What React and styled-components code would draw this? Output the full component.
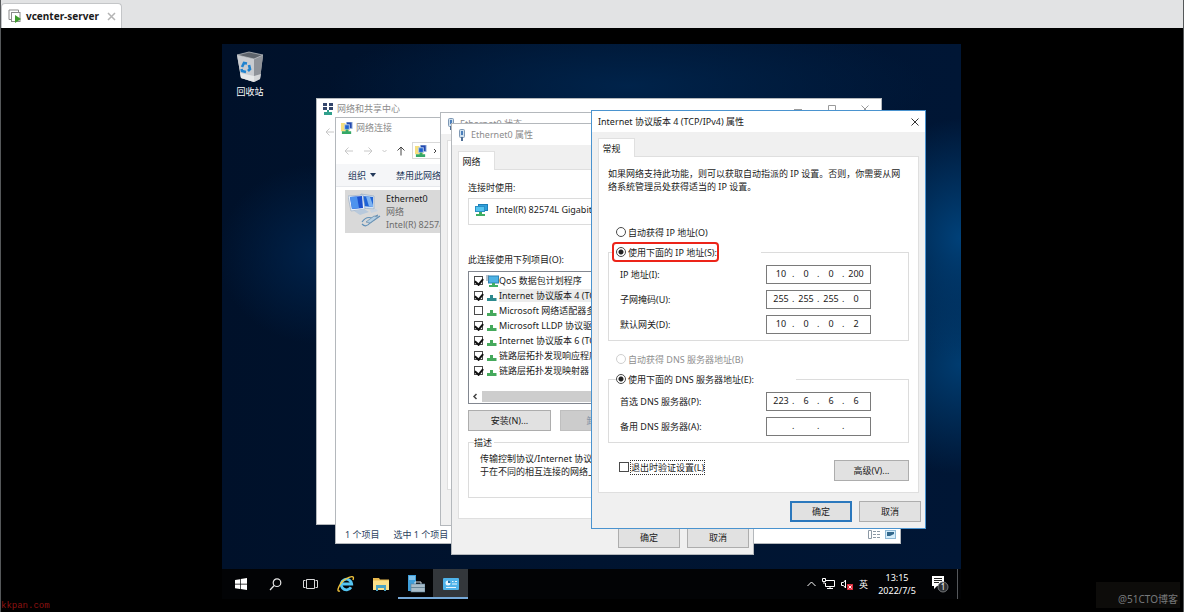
import React, { useState } from 'react';
import styled, { createGlobalStyle, css } from 'styled-components';

const GlobalStyle = createGlobalStyle`
  * {
    box-sizing: border-box;
  }
  body {
    margin: 0;
    background: #000000;
    color: #1a1a1a;
    font-family: "Noto Sans", "Noto Sans CJK SC", sans-serif;
    font-size: 9px;
    line-height: 13px;
  }
  button, input {
    font: inherit;
    color: inherit;
    margin: 0;
    padding: 0;
  }
  svg {
    display: block;
    flex: none;
  }
`
const Page = styled.div`
  min-height: 100vh;
  display: flex;
  flex-direction: column;
  position: relative;
  border-left: 1px solid #55585a;
  border-right: 1px solid #55585a;
`
const TabStrip = styled.div`
  display: flex;
  align-items: flex-end;
  height: 28px;
  background: #e2e3e4;
`
const VmTab = styled.div`
  display: flex;
  align-items: center;
  gap: 4px;
  height: 25px;
  padding: 0 5px 0 6px;
  background: #ffffff;
  border: 1px solid #c4c6c8;
  border-bottom: 0;
  border-radius: 4px 4px 0 0;
  font-size: 10px;
  font-weight: bold;
`
const TabClose = styled.button`
  margin-left: 4px;
  border: 0;
  background: none;
`
const Console = styled.div`
  flex: 1;
  display: flex;
  padding: 16px 222px 13px 221px;
  background: #000000;
`
const Desktop = styled.div`
  flex: 1;
  display: flex;
  flex-direction: column;
  position: relative;
`
const Wallpaper = styled.div`
  flex: 1;
  padding: 6px 10px;
  background:
    radial-gradient(ellipse 100px 120px at 100% 37%, #004179 0%, rgba(0, 65, 121, 0) 100%),
    radial-gradient(ellipse 110px 110px at 100% 61%, #003c70 0%, rgba(0, 60, 112, 0) 100%),
    radial-gradient(ellipse 100px 90px at 13% 40%, #00224a 0%, rgba(0, 34, 74, 0) 100%),
    radial-gradient(ellipse 300px 70px at 55% 8%, #00234a 0%, rgba(0, 35, 74, 0) 100%),
    linear-gradient(90deg, #00112a 0%, #001430 50%, #001635 100%);
`
const DesktopIcon = styled.div`
  width: 36px;
  display: flex;
  flex-direction: column;
  align-items: center;
  gap: 1px;
  color: #ffffff;
`

/* windows */
const Window = styled.div`
  position: absolute;
  left: ${p => p.$x}px;
  top: ${p => p.$y}px;
  width: ${p => p.$w}px;
  display: flex;
  flex-direction: column;
  overflow: hidden;
  background: ${p => p.$dialog ? '#f0f0f0' : '#ffffff'};
  border: 1px solid ${p => p.$active ? '#4a93cf' : '#b4b8bc'};
  ${p => p.$h && css`height: ${p.$h}px;`}
`
const TitleBar = styled.div`
  display: flex;
  align-items: center;
  gap: 5px;
  height: 21px;
  padding: 0 6px;
  background: #ffffff;
  color: ${p => p.$active ? '#1a1a1a' : '#8c8c8c'};
`
const FolderTitleBar = styled(TitleBar)`
  gap: 3px;
  height: 19px;
  padding: 0 12px 0 5px;
`
const WindowButtons = styled.div`
  display: flex;
  gap: 24px;
  margin-left: auto;
`
const CaptionButton = styled.button`
  border: 0;
  background: none;
  color: ${p => p.$active ? '#333333' : '#9a9a9a'};
`
const NavBar = styled.div`
  display: flex;
  align-items: center;
  gap: 9px;
  height: 27px;
  padding: 0 8px;
`
const AddressBox = styled.div`
  flex: 1;
  display: flex;
  align-items: center;
  gap: 6px;
  height: 17px;
  margin-left: -3px;
  padding: 0 2px;
  border: 1px solid #d9d9d9;
`
const CommandBar = styled.div`
  display: flex;
  align-items: center;
  gap: 20px;
  height: 23px;
  padding: 0 12px;
  background: #f5f6f8;
  border-bottom: 1px solid #e6e8ec;
  color: #23395a;
`
const Command = styled.button`
  display: flex;
  align-items: center;
  gap: 4px;
  border: 0;
  background: none;
`
const Connection = styled.div`
  display: flex;
  gap: 4px;
  width: 180px;
  height: 43px;
  margin: 3px 9px;
  padding: 2px 3px;
  background: #d9d9d9;
  color: #6d6d6d;
`
const ConnectionName = styled.div`
  color: #1a1a1a;
`
const StatusBar = styled.div`
  display: flex;
  align-items: center;
  gap: 14px;
  height: 17px;
  margin-top: auto;
  padding: 0 4px 0 9px;
  color: #2b4260;
`
const ViewIcons = styled.div`
  display: flex;
  gap: 5px;
  margin-left: auto;
`
const Tabs = styled.div`
  display: flex;
  padding: 6px 6px 0;
`
const Tab = styled.button`
  height: 19px;
  width: 37px;
  padding-right: 10px;
  margin-bottom: -1px;
  background: #ffffff;
  border: 1px solid #e0e0e0;
  border-bottom: 0;
  z-index: 1;
`
const Panel = styled.div`
  margin: 0 6px;
  padding: ${p => p.$top || 10}px 9px ${p => p.$bottom}px;
  background: #ffffff;
  border: 1px solid #dfdfdf;
`
const Footer = styled.div`
  display: flex;
  justify-content: flex-end;
  gap: 7px;
  padding: 8px 4px 6px;
`
const Button = styled.button`
  width: ${p => p.$width || 62}px;
  height: 21px;
  background: ${p => p.disabled ? '#cccccc' : '#e1e1e1'};
  border: ${p => p.$primary ? '2px solid #2b78bd' : '1px solid #adadad'};
  ${p => p.disabled && css`
    border-color: #bfbfbf;
    color: #8290a4;
  `}
`
const Adapter = styled.div`
  display: flex;
  align-items: center;
  gap: 8px;
  height: 27px;
  margin: 4px 0 28px;
  padding: 0 6px 4px;
  border: 1px solid #dcdcdc;
  white-space: nowrap;
`
const ItemList = styled.div`
  display: flex;
  flex-direction: column;
  height: 133px;
  margin: 5px 0 6px;
  padding-top: 1px;
  border: 1px solid #828790;
`
const Item = styled.label`
  display: flex;
  align-items: center;
  height: 15px;
  padding-left: 5px;
  white-space: nowrap;
`
const ItemIcon = styled.span`
  width: 13px;
  margin-left: 3px;
`
const ItemText = styled.span`
  flex: 1;
  background: ${p => p.$selected ? '#ececec' : 'none'};
`
const ScrollBar = styled.div`
  display: flex;
  align-items: center;
  height: 13px;
  margin-top: auto;
  padding-left: 3px;
`
const ScrollThumb = styled.div`
  flex: 1;
  height: 11px;
  margin-left: 4px;
  background: #cdcdcd;
`
const ButtonRow = styled.div`
  display: flex;
  gap: 9px;
  margin-bottom: 5px;
`
const Group = styled.fieldset`
  margin: 0;
  padding: 3px 0 6px 11px;
  border: 1px solid #dcdcdc;
`
const DescriptionGroup = styled(Group)`
  height: 62px;
  white-space: nowrap;
`
const Legend = styled.legend`
  margin-left: ${p => p.$inset}px;
  padding: 0 ${p => p.$gap}px 0 0;
`
const Intro = styled.p`
  margin: 0 0 29px;
`
const Choice = styled.label`
  display: flex;
  align-items: center;
  gap: 2px;
  width: max-content;
  height: ${p => p.$short ? 14 : 20}px;
  margin-top: ${p => p.$gap || 0}px;
  color: ${p => p.$off ? '#8f8f8f' : 'inherit'};
  ${p => p.$indent && css`margin-left: 8px;`}
  ${p => p.$marked && css`
    padding: 0 0 0 2px;
    border: 2px solid #ec2419;
    border-radius: 4px;
  `}
`
const Radio = styled.input`
  appearance: none;
  width: 10px;
  height: 10px;
  border: 1px solid ${p => p.disabled ? '#cfcfcf' : '#4a4a4a'};
  border-radius: 50%;
  &:checked {
    background: radial-gradient(circle, #222222 0 2px, #ffffff 3px);
  }
`
const Check = styled.input`
  appearance: none;
  display: grid;
  place-items: center;
  width: ${p => p.$large ? 10 : 9}px;
  height: ${p => p.$large ? 10 : 9}px;
  background: #ffffff;
  border: 1px solid #4a4a4a;
  &:checked::after {
    content: "";
    width: 4px;
    height: 6px;
    margin-bottom: 1px;
    border: solid #111111;
    border-width: 0 2px 2px 0;
    transform: rotate(40deg);
  }
`
const FocusText = styled.span`
  outline: 1px dotted #333333;
`
const AddressRow = styled.div`
  display: flex;
  align-items: center;
  margin-bottom: ${p => p.$last ? 0 : 6}px;
`
const AddressLabel = styled.label`
  width: 146px;
`
const AddressField = styled.div`
  display: flex;
  width: 105px;
  height: 19px;
  padding: 0 3px;
  background: #ffffff;
  border: 1px solid #7a7a7a;
  line-height: 15px;
`
const Octet = styled.input`
  width: 22px;
  height: 15px;
  border: 0;
  outline: 0;
  background: none;
  text-align: center;
`
const Dot = styled.span`
  width: 3px;
`
const OptionsRow = styled.div`
  display: flex;
  align-items: flex-start;
  justify-content: space-between;
  margin-top: 17px;
  padding-left: 11px;
`

/* taskbar */
const Taskbar = styled.div`
  display: flex;
  height: 30px;
  padding-left: 1px;
  background: #020305;
  color: #ffffff;
`
const TaskButton = styled.button`
  width: 35px;
  display: flex;
  align-items: center;
  justify-content: center;
  border: 0;
  border-bottom: 2px solid ${p => p.$open ? '#76a9d8' : 'transparent'};
  border-top: 2px solid ${p => p.$active ? '#33373b' : 'transparent'};
  background: ${p => p.$active ? '#33373b' : 'none'};
`
const Tray = styled.div`
  display: flex;
  align-items: center;
  gap: 6px;
  margin-left: auto;
  padding-right: 3px;
`
const Clock = styled.div`
  width: 42px;
  margin-left: 2px;
  text-align: center;
`
const Notifications = styled.div`
  margin-left: 7px;
  padding-right: 8px;
  border-right: 1px solid #55585c;
  height: 30px;
  display: flex;
  align-items: center;
`
const SiteMark = styled.div`
  position: absolute;
  left: 0;
  bottom: 0;
  color: #8e1210;
  font-family: "Liberation Mono", monospace;
  font-size: 9px;
  line-height: 11px;
`
const BlogMark = styled.div`
  position: absolute;
  right: 3px;
  bottom: 4px;
  width: 84px;
  height: 26px;
  padding: 11px 2px 0 0;
  background: #0d0c0a;
  color: #77797b;
  font-size: 10px;
  text-align: right;
`

const items = [
  { id: 1, name: 'QoS 数据包计划程序', checked: true, icon: 'pc' },
  { id: 2, name: 'Internet 协议版本 4 (TCP/IPv4)', checked: true, icon: 'blue', selected: true },
  { id: 3, name: 'Microsoft 网络适配器多路传送器协议', checked: false },
  { id: 4, name: 'Microsoft LLDP 协议驱动程序', checked: true },
  { id: 5, name: 'Internet 协议版本 6 (TCP/IPv6)', checked: true },
  { id: 6, name: '链路层拓扑发现响应程序', checked: true },
  { id: 7, name: '链路层拓扑发现映射器 I/O 驱动程序', checked: true },
];

const ipRows = [
  { id: 'ip', label: 'IP 地址(I):', value: ['10', '0', '0', '200'] },
  { id: 'mask', label: '子网掩码(U):', value: ['255', '255', '255', '0'] },
  { id: 'gateway', label: '默认网关(D):', value: ['10', '0', '0', '2'] },
];

const dnsRows = [
  { id: 'dns1', label: '首选 DNS 服务器(P):', value: ['223', '6', '6', '6'] },
  { id: 'dns2', label: '备用 DNS 服务器(A):', value: ['', '', '', ''] },
];

const CloseIcon = ({ size = 8 }) => (
  <svg width={size} height={size} viewBox="0 0 8 8" stroke="currentColor" fill="none">
    <path d="M0.5 0.5l7 7M7.5 0.5l-7 7" />
  </svg>
)

const VmIcon = () => (
  <svg width="14" height="14" viewBox="0 0 14 14" fill="none">
    <path d="M3 10.500H1V1h9.500v2" stroke="#8b8b8b" />
    <rect x="3.500" y="3.500" width="8.500" height="9" fill="#fff" stroke="#8b8b8b" />
    <path d="M7 6l6 4-6 4z" fill="#3f9b2d" />
  </svg>
)

const BinIcon = () => (
  <svg width="30" height="34" viewBox="0 0 30 34">
    <path d="M2 5l4 23 13 4 6-3 3-23z" fill="#a9adb2" />
    <path d="M2 5l17 4v23L6 28z" fill="#c9ccd0" />
    <path d="M19 9l9-4-3 24-6 3z" fill="#8f9399" />
    <path d="M2 5l12-3 14 3-9 4z" fill="#5f656c" stroke="#c6c9cc" strokeWidth=".7" />
    <path d="M5 23l14 3 7-2-1 5-6 3-13-4z" fill="#f2f3f4" opacity=".7" />
    <g fill="none" stroke="#1f83cf" strokeWidth="2.600">
      <path d="M7 17l2-4 3 .5" />
      <path d="M14 15l1 4-2 2" />
      <path d="M11 22l-4-1-.5-2" />
    </g>
  </svg>
)

const NetworkIcon = () => (
  <svg width="12" height="12" viewBox="0 0 12 12">
    <g fill="#34466b">
      <rect x="1" y="0" width="4" height="3" /><rect x="7" y="0" width="4" height="3" />
      <rect x="1" y="4" width="4" height="3" /><rect x="7" y="4" width="4" height="3" />
    </g>
    <path d="M5 7h2v2h3v3H2V9h3z" fill="#2f9f8b" />
  </svg>
)

const FolderNetIcon = () => (
  <svg width="12" height="12" viewBox="0 0 13 13">
    <path d="M0 1h4l1 1h4v8H0z" fill="#f5df7e" />
    <rect x="6" y="0" width="6" height="7" fill="#2448b0" stroke="#9db8dc" />
    <rect x="4" y="3" width="5" height="5" fill="#1d62d0" stroke="#b9cdea" />
    <path d="M5 8h3v2h3v3H1v-3h4z" fill="#35a866" />
  </svg>
)

const PlugIcon = () => (
  <svg width="8" height="12" viewBox="0 0 8 12">
    <rect x="1.500" y="0.500" width="5" height="8" rx="1" fill="#cfe0ee" stroke="#7f98b4" />
    <path d="M3 2h2v4H3z" fill="#4a7ebb" />
    <path d="M4 8v4" stroke="#4f6f96" strokeWidth="2" />
  </svg>
)

const MonitorIcon = () => (
  <svg width="13" height="12" viewBox="0 0 13 12">
    <rect x="3.500" y="0.500" width="9" height="6" fill="#2f9fdc" stroke="#1d7fb6" />
    <rect x="0.500" y="2.500" width="9" height="5" fill="#55c4ef" stroke="#2b8fc4" />
    <path d="M4 8h3v2h3v2H1v-2h3z" fill="#3fae62" />
  </svg>
)

const ServiceIcon = () => (
  <svg width="13" height="12" viewBox="0 0 13 12">
    <rect x="2.500" y="1" width="10" height="7" fill="#4db2e4" stroke="#2b82b4" />
    <path d="M0 1h3M0 3h3M0 5h3" stroke="#6f8799" />
    <path d="M6 8h3v2h3v2H3v-2h3z" fill="#3fae62" />
  </svg>
)

const ProtocolIcon = ({ color = '#45a95c' }) => (
  <svg width="12" height="10" viewBox="0 0 12 10">
    <path d="M4 4h3v3h3.500v3H1V7h3z" fill={color} />
  </svg>
)

const ConnectionIcon = () => (
  <svg width="34" height="36" viewBox="0 0 34 36">
    <path d="M13 2l13 2v13l-13-1z" fill="#d4e2f2" stroke="#8ea4bd" strokeWidth=".6" />
    <path d="M14 4l11 1v10l-11-1z" fill="#1f63d6" />
    <path d="M18 4.500l4 .4 3 8v2l-4-.4z" fill="#7db2f0" />
    <path d="M0 4l15-1 2 14-14 2z" fill="#e6effa" stroke="#8ea4bd" strokeWidth=".6" />
    <path d="M2 5l12-1 1 12-11 1z" fill="#1c50cf" />
    <path d="M2 5l7-.5L11 16l-7 1z" fill="#4d92ee" />
    <path d="M6 19l10-2 5 3-9 3z" fill="#b8c9dc" />
    <path d="M22 18l6-1 2 2-7 2z" fill="#c6d3e1" />
    <path d="M14 32q4 4 8-1l10-7M14 30q4-6 10-4l6-3" fill="none" stroke="#5e8fb8" strokeWidth="1.200" />
    <path d="M18 30l8-6 4 1-8 6z" fill="#b3cfe4" stroke="#6a8caa" strokeWidth=".7" />
  </svg>
)

const Arrow = ({ d = 'M9 5H1M4.500 1.500L1 5l3.500 3.500', color = '#c8c8c8' }) => (
  <svg width="10" height="10" viewBox="0 0 10 10" fill="none" stroke={color}><path d={d} /></svg>
)

const AddressInput = ({ id, label, value, last }) => {
  const [octets, setOctets] = useState(value);
  const change = (index, text) => {
    setOctets(octets.map((octet, i) => i === index ? text : octet));
  }
  return (
    <AddressRow $last={last}>
      <AddressLabel htmlFor={id + '-0'}>{label}</AddressLabel>
      <AddressField>
        {octets.map((octet, i) =>
          <React.Fragment key={i}>
            {i > 0 && <Dot>.</Dot>}
            <Octet
              id={id + '-' + i}
              aria-label={label + ' ' + (i + 1)}
              maxLength={3}
              value={octet}
              onChange={e => change(i, e.target.value)}
            />
          </React.Fragment>
        )}
      </AddressField>
    </AddressRow>
  );
}

const SharingCenter = () => (
  <Window $x={94} $y={54} $w={566} $h={427}>
    <FolderTitleBar>
      <NetworkIcon />
      网络和共享中心
      <WindowButtons>
        <CaptionButton aria-label="最小化"><Arrow d="M1 5.500h8" color="#9a9a9a" /></CaptionButton>
        <CaptionButton aria-label="最大化"><Arrow d="M1.500 1.500h7v7h-7z" color="#9a9a9a" /></CaptionButton>
        <CaptionButton aria-label="关闭"><CloseIcon /></CaptionButton>
      </WindowButtons>
    </FolderTitleBar>
    <NavBar><Arrow /></NavBar>
  </Window>
)

const Connections = () => (
  <Window $x={113} $y={73} $w={566} $h={427}>
    <FolderTitleBar>
      <FolderNetIcon />
      网络连接
    </FolderTitleBar>
    <NavBar>
      <Arrow />
      <Arrow d="M1 5h8M5.500 1.500L9 5 5.500 8.500" />
      <svg width="5" height="4" viewBox="0 0 5 4" fill="none" stroke="#c8c8c8"><path d="M0.500 1l2 2 2-2" /></svg>
      <Arrow d="M5 9.500V1M1.500 4.500L5 1l3.500 3.500" color="#444444" />
      <AddressBox>
        <FolderNetIcon />
        <svg width="4" height="6" viewBox="0 0 4 6" fill="none" stroke="#444"><path d="M1 1l2 2-2 2" /></svg>
      </AddressBox>
    </NavBar>
    <CommandBar>
      <Command>
        组织
        <svg width="6" height="4" viewBox="0 0 6 4"><path d="M0 0h6L3 4z" fill="#23395a" /></svg>
      </Command>
      <Command>禁用此网络设备</Command>
    </CommandBar>
    <Connection>
      <ConnectionIcon />
      <div>
        <ConnectionName>Ethernet0</ConnectionName>
        <div>网络</div>
        <div>Intel(R) 82574L Gigabit</div>
      </div>
    </Connection>
    <StatusBar>
      <span>1 个项目</span>
      <span>选中 1 个项目</span>
      <ViewIcons>
        <svg width="12" height="9" viewBox="0 0 12 9" fill="none" stroke="#8c99a5">
          <path d="M0.500 0.500h3v8h-3zM5 1.500h3M9 1.500h3M5 4.500h3M9 4.500h3M5 7.500h3M9 7.500h3" />
        </svg>
        <svg width="11" height="9" viewBox="0 0 11 9">
          <rect x="0.500" y="0.500" width="10" height="8" fill="#d5edfb" stroke="#8fb9d6" />
          <path d="M2 2h7v2L5 6H2z" fill="#32678c" />
        </svg>
      </ViewIcons>
    </StatusBar>
  </Window>
)

const EthernetStatus = () => (
  <Window $x={218} $y={68} $w={290} $h={414} $dialog>
    <TitleBar>
      <PlugIcon />
      Ethernet0 状态
    </TitleBar>
    <Tabs />
    <Panel $bottom={338} />
  </Window>
)

const EthernetProperties = () => (
  <Window $x={229} $y={79} $w={303} $dialog>
    <TitleBar>
      <PlugIcon />
      Ethernet0 属性
    </TitleBar>
    <Tabs><Tab>网络</Tab></Tabs>
    <Panel $top={11} $bottom={20}>
      连接时使用:
      <Adapter>
        <MonitorIcon />
        Intel(R) 82574L Gigabit Network
      </Adapter>
      此连接使用下列项目(O):
      <ItemList>
        {items.map(item =>
          <Item key={item.id}>
            <Check type="checkbox" defaultChecked={item.checked} />
            <ItemIcon>
              {item.icon === 'pc'
                ? <ServiceIcon />
                : <ProtocolIcon color={item.icon === 'blue' ? '#2d8a8e' : '#45a95c'} />}
            </ItemIcon>
            <ItemText $selected={item.selected}>{item.name}</ItemText>
          </Item>
        )}
        <ScrollBar>
          <svg width="6" height="7" viewBox="0 0 6 7" fill="none" stroke="#444" strokeWidth="1.500"><path d="M4.500 1L2 3.500 4.500 6" /></svg>
          <ScrollThumb />
        </ScrollBar>
      </ItemList>
      <ButtonRow>
        <Button $width={83}>安装(N)...</Button>
        <Button $width={83} disabled>卸载(U)</Button>
      </ButtonRow>
      <DescriptionGroup>
        <Legend $inset={-6} $gap={2}>描述</Legend>
        传输控制协议/Internet 协议。<br />
        于在不同的相互连接的网络上
      </DescriptionGroup>
    </Panel>
    <Footer>
      <Button>确定</Button>
      <Button>取消</Button>
    </Footer>
  </Window>
)

const Ipv4Properties = () => (
  <Window $x={369} $y={66} $w={335} $dialog $active>
    <TitleBar $active>
      Internet 协议版本 4 (TCP/IPv4) 属性
      <WindowButtons>
        <CaptionButton $active aria-label="关闭"><CloseIcon /></CaptionButton>
      </WindowButtons>
    </TitleBar>
    <Tabs><Tab>常规</Tab></Tabs>
    <Panel $bottom={11}>
      <Intro>
        如果网络支持此功能，则可以获取自动指派的 IP 设置。否则，你需要从网<br />
        络系统管理员处获得适当的 IP 设置。
      </Intro>
      <Choice $indent>
        <Radio type="radio" name="address" />
        自动获得 IP 地址(O)
      </Choice>
      <Group>
        <Legend $inset={-8} $gap={42}>
          <Choice $marked>
            <Radio type="radio" name="address" defaultChecked />
            使用下面的 IP 地址(S):
          </Choice>
        </Legend>
        {ipRows.map((row, i) => <AddressInput key={row.id} {...row} last={i === 2} />)}
      </Group>
      <Choice $indent $off $gap={8}>
        <Radio type="radio" name="dns" disabled />
        自动获得 DNS 服务器地址(B)
      </Choice>
      <Group>
        <Legend $inset={-4} $gap={42}>
          <Choice>
            <Radio type="radio" name="dns" defaultChecked />
            使用下面的 DNS 服务器地址(E):
          </Choice>
        </Legend>
        {dnsRows.map((row, i) => <AddressInput key={row.id} {...row} last={i === 1} />)}
      </Group>
      <OptionsRow>
        <Choice $short>
          <Check type="checkbox" $large />
          <FocusText>退出时验证设置(L)</FocusText>
        </Choice>
        <Button $width={75}>高级(V)...</Button>
      </OptionsRow>
    </Panel>
    <Footer>
      <Button $primary>确定</Button>
      <Button>取消</Button>
    </Footer>
  </Window>
)

const TaskbarArea = () => (
  <Taskbar>
    <TaskButton aria-label="开始">
      <svg width="12" height="12" viewBox="0 0 12 12" fill="#fff">
        <path d="M0 2l5-.8v4.500H0zM5.700 1L12 0v5.700H5.700zM0 6.400h5v4.500L0 10.200zM5.700 6.400H12V12l-6.300-1z" />
      </svg>
    </TaskButton>
    <TaskButton aria-label="搜索">
      <svg width="13" height="13" viewBox="0 0 13 13" fill="none" stroke="#e8e8e8" strokeWidth="1.200">
        <circle cx="8" cy="4.700" r="3.800" /><path d="M5.200 7.500L1 12" />
      </svg>
    </TaskButton>
    <TaskButton aria-label="任务视图">
      <svg width="15" height="12" viewBox="0 0 15 12" fill="none" stroke="#d8d8d8">
        <path d="M3.500 1.500h8v9h-8zM2.500 2.500h-2v7h2M12.500 2.500h2v7h-2" />
      </svg>
    </TaskButton>
    <TaskButton aria-label="Internet Explorer">
      <svg width="18" height="18" viewBox="0 0 18 18" fill="none">
        <path d="M14 12.200A5.300 5.300 0 1 1 14.700 9H5" stroke="#54c5f2" strokeWidth="2.800" />
        <path d="M3 16Q-.5 17 2 11.500 5 5 12 2.300 18 0 16 5" stroke="#f2c53d" strokeWidth="1.400" />
      </svg>
    </TaskButton>
    <TaskButton aria-label="文件资源管理器">
      <svg width="16" height="14" viewBox="0 0 16 14">
        <path d="M0 1h6l1 1.500h9V13H0z" fill="#e9b94e" />
        <path d="M0 3.500h16V13H0z" fill="#fbe08a" />
        <path d="M3 8h10v6h-2v-3H5v3H3z" fill="#4aa3c4" />
      </svg>
    </TaskButton>
    <TaskButton $open aria-label="服务器管理器">
      <svg width="18" height="18" viewBox="0 0 18 18">
        <rect x="1" y="0" width="8" height="16" fill="#3f9fdb" />
        <path d="M2 2h6M2 4h6" stroke="#bfe2f7" />
        <path d="M8 9V7h6v2" fill="none" stroke="#d4dde4" />
        <rect x="4" y="9" width="14" height="8" fill="#a9bdca" stroke="#5d7f97" strokeWidth=".6" />
        <path d="M4 12.500h14" stroke="#6a8799" />
      </svg>
    </TaskButton>
    <TaskButton $open $active aria-label="控制面板">
      <svg width="16" height="12" viewBox="0 0 16 12">
        <rect width="16" height="12" rx="1" fill="#4fb3ea" />
        <circle cx="5" cy="5" r="2.500" fill="#eaf6fd" /><path d="M5 5V2.500A2.500 2.500 0 0 1 7.500 5z" fill="#1d6fa8" />
        <path d="M9 3.500h1.500M12 3.500h2M9 6h5M3 9.500h10" stroke="#eaf6fd" />
      </svg>
    </TaskButton>
    <Tray>
      <svg width="9" height="6" viewBox="0 0 9 6" fill="none" stroke="#fff"><path d="M0.500 5l4-4 4 4" /></svg>
      <svg width="13" height="12" viewBox="0 0 13 12" fill="none" stroke="#fff">
        <path d="M4 2.500h8.500v6H3.500V5M8 8.500v2M5 10.500h6M0.500 0.500h3v3h-3zM2 3.500V6" />
      </svg>
      <svg width="12" height="11" viewBox="0 0 12 11" fill="none">
        <path d="M0.500 3.500h2l2-2.500v8l-2-2.500h-2z" stroke="#fff" />
        <rect x="6" y="5" width="6" height="6" fill="#d92b3a" />
        <path d="M7.500 6.500l3 3M10.500 6.500l-3 3" stroke="#fff" />
      </svg>
      <span>英</span>
      <Clock>13:15<br />2022/7/5</Clock>
      <Notifications>
        <svg width="18" height="18" viewBox="0 0 18 18">
          <path d="M1 1h12v10H6l-3 3v-3H1z" fill="#fff" />
          <path d="M3 3.500h8M3 5.500h8M3 7.500h5" stroke="#222" />
          <circle cx="12" cy="12" r="5" fill="#2d3034" stroke="#8a8d90" strokeWidth=".8" />
          <text x="12" y="15" fill="#fff" fontSize="8" textAnchor="middle">1</text>
        </svg>
      </Notifications>
    </Tray>
  </Taskbar>
)

function App() {
  return (
    <Page>
      <GlobalStyle />
      <TabStrip>
        <VmTab>
          <VmIcon />
          vcenter-server
          <TabClose aria-label="close"><svg width="9" height="9" viewBox="0 0 9 9" stroke="#b4b4b4" strokeWidth="1.500"><path d="M1 1l7 7M8 1L1 8" /></svg></TabClose>
        </VmTab>
      </TabStrip>
      <Console>
        <Desktop>
          <Wallpaper>
            <DesktopIcon>
              <BinIcon />
              回收站
            </DesktopIcon>
          </Wallpaper>
          <TaskbarArea />
          <SharingCenter />
          <Connections />
          <EthernetStatus />
          <EthernetProperties />
          <Ipv4Properties />
        </Desktop>
      </Console>
      <SiteMark>kkpan.com</SiteMark>
      <BlogMark>@51CTO博客</BlogMark>
    </Page>
  );
}

export default App;
